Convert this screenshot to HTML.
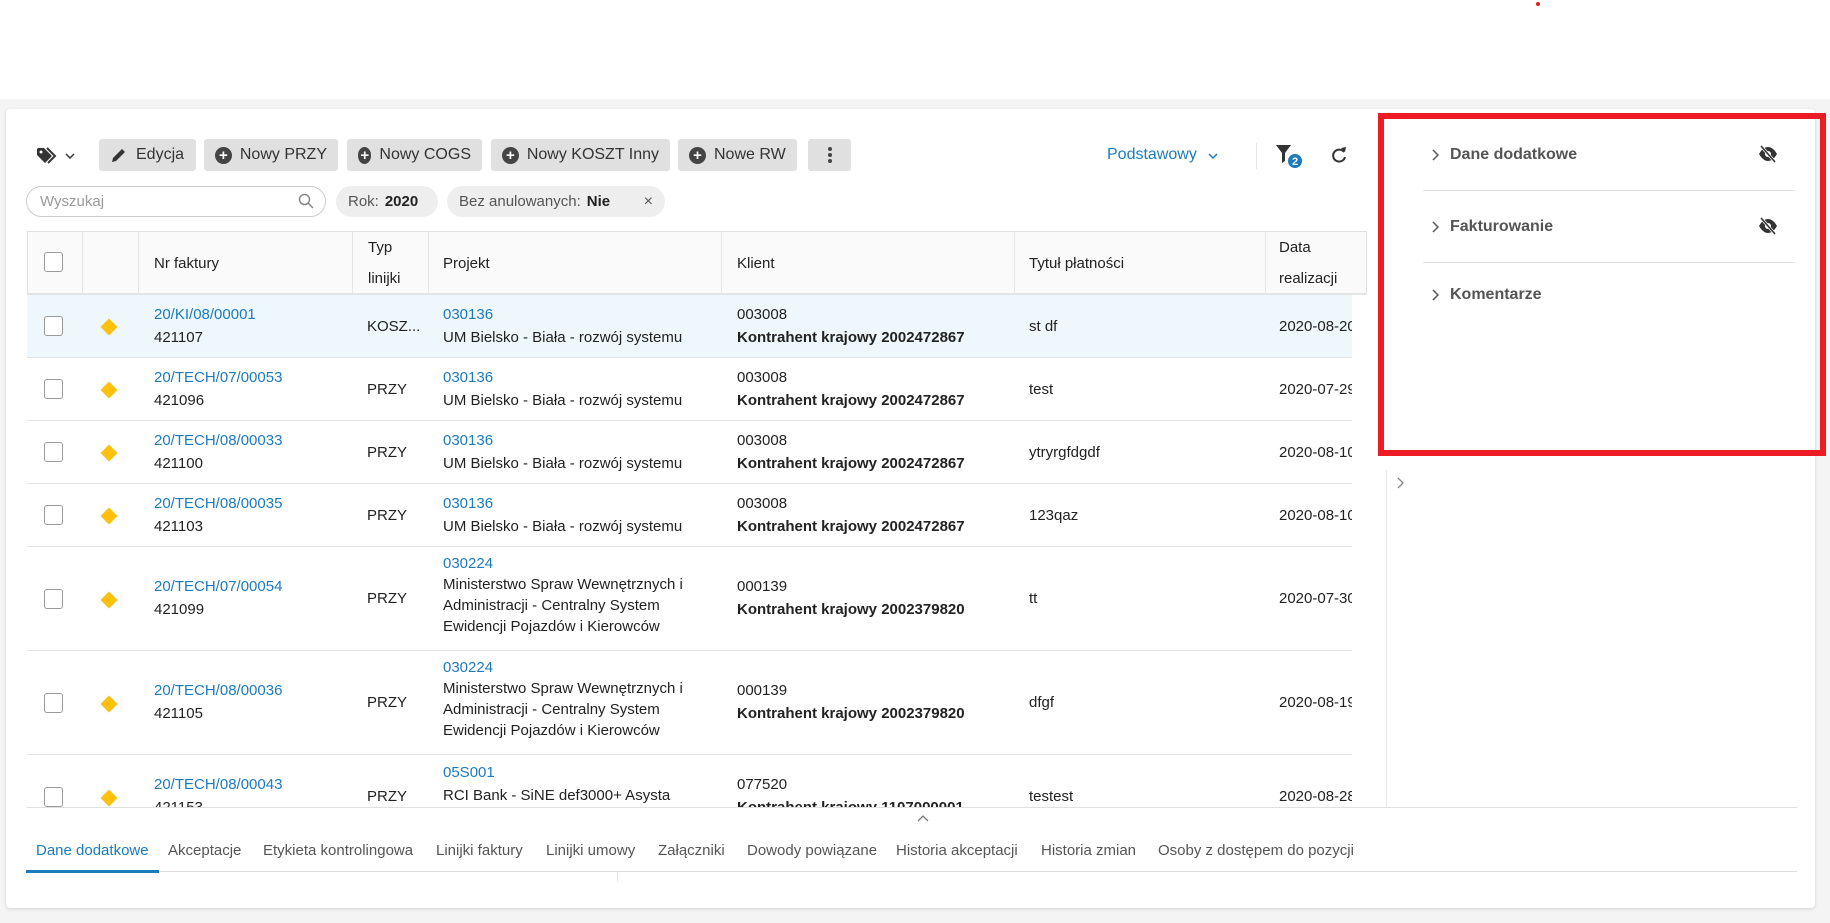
<!DOCTYPE html>
<html><head><meta charset="utf-8"><style>
*{box-sizing:border-box;margin:0;padding:0}
body{width:1830px;height:923px;position:relative;background:#fff;font-family:"Liberation Sans",sans-serif;font-size:15px;color:#222;overflow:hidden}
.abs{position:absolute}
.bg{left:0;top:99px;width:1830px;height:824px;background:#f4f4f4}
.card{left:6px;top:109px;width:1809px;height:799px;background:#fff;border-radius:4px;box-shadow:0 1px 3px rgba(0,0,0,.15)}
.btn{top:139px;height:32px;background:#e0e0e0;border-radius:3px;display:flex;align-items:center;padding:0 11px;color:#333;font-size:16px;white-space:nowrap}
.plus{width:17px;height:17px;border-radius:50%;background:#444;color:#fff;font-size:15px;line-height:17px;text-align:center;font-weight:bold;margin-right:8px}
.chip{top:186px;height:31px;background:#eee;border-radius:16px;display:flex;align-items:center;padding:0 12px;color:#555;font-size:15px}
.chip b{color:#222;margin-left:6px;font-weight:bold}
.hd{top:231px;height:64px;background:#fafafa;border-top:1px solid #e0e0e0;border-bottom:2px solid #e4e4e4}
.vl{width:1px;background:#e6e6e6}
.th{top:231px;height:64px;display:flex;align-items:center;font-size:15px;color:#222}
.row{left:27px;width:1325px;border-bottom:1px solid #e4e4e4}
.cb{width:19px;height:20px;border:1.5px solid #999;border-radius:3px;background:#fff}
.dia{width:12px;height:12px;background:#fdc00f;transform:rotate(45deg)}
.c{font-size:15px;line-height:23px;white-space:nowrap}
.lk{color:#1b7bbd}
.bd{font-weight:bold}
.tab{top:842px;font-size:15px;color:#555;white-space:nowrap}
.ph{left:1431px;font-size:16px;color:#555;display:flex;align-items:center}
</style></head><body>
<div class="abs" style="left:1536px;top:2px;width:4px;height:4px;border-radius:50%;background:#e02020"></div>
<div class="abs bg"></div>
<div class="abs card"></div>

<svg class="abs" style="left:36px;top:147px" width="22" height="18" viewBox="0 0 22 18"><path d="M1 2v6l8 8 7-7-8-8H2z" fill="#333"/><circle cx="5" cy="5" r="1.5" fill="#fff"/><path d="M11 1l8 8-7 7" stroke="#333" stroke-width="2" fill="none"/></svg>
<svg class="abs" style="left:65px;top:152px" width="10" height="8"><path d="M1 2l4 4 4-4" stroke="#333" stroke-width="1.5" fill="none"/></svg>
<div class="abs btn" style="left:99px;width:97px"><svg width="18" height="18" style="margin-right:8px"><path d="M2 16l1-4 9-9 3 3-9 9z" fill="#333"/></svg>Edycja</div>
<div class="abs btn" style="left:204px;width:134px"><span class="plus">+</span>Nowy PRZY</div>
<div class="abs btn" style="left:347px;width:135px"><span class="plus">+</span>Nowy COGS</div>
<div class="abs btn" style="left:491px;width:179px"><span class="plus">+</span>Nowy KOSZT Inny</div>
<div class="abs btn" style="left:678px;width:119px"><span class="plus">+</span>Nowe RW</div>
<div class="abs btn" style="left:808px;width:43px;justify-content:center"><svg width="4" height="16"><circle cx="2" cy="2" r="2" fill="#444"/><circle cx="2" cy="8" r="2" fill="#444"/><circle cx="2" cy="14" r="2" fill="#444"/></svg></div>
<div class="abs" style="left:1107px;top:146px;color:#1b7bbd;font-size:16px">Podstawowy</div>
<svg class="abs" style="left:1208px;top:152px" width="10" height="8"><path d="M1 2l4 4 4-4" stroke="#1b7bbd" stroke-width="1.5" fill="none"/></svg>
<div class="abs vl" style="left:1256px;top:143px;height:26px"></div>
<svg class="abs" style="left:1275px;top:144px" width="30" height="26"><path d="M1 1h15l-6 8v8l-3 2V9z" fill="#333"/><circle cx="20" cy="17" r="7" fill="#1b7bbd"/><text x="20" y="21" font-size="11" fill="#fff" text-anchor="middle" font-family="Liberation Sans" font-weight="bold">2</text></svg>
<svg class="abs" style="left:1331px;top:146px" width="16" height="18"><path d="M13 6A6 6 0 1 0 14 11" stroke="#333" stroke-width="2" fill="none"/><path d="M10 2l4 4 1-5z" fill="#333"/></svg>

<div class="abs" style="left:26px;top:186px;width:300px;height:31px;border:1px solid #ccc;border-radius:16px;padding:6px 13px;color:#999;font-size:15px">Wyszukaj</div>
<svg class="abs" style="left:298px;top:193px" width="16" height="16"><circle cx="6.5" cy="6.5" r="5" stroke="#888" stroke-width="1.5" fill="none"/><path d="M10 10l5 5" stroke="#888" stroke-width="1.5"/></svg>
<div class="abs chip" style="left:336px;width:102px">Rok: <b>2020</b></div>
<div class="abs chip" style="left:447px;width:218px">Bez anulowanych: <b>Nie</b><span style="margin-left:auto;font-size:16px">×</span></div>

<div class="abs hd" style="left:27px;width:1340px;border-left:1px solid #e0e0e0;border-right:1px solid #e0e0e0"></div>
<div class="abs vl" style="left:82px;top:231px;height:64px"></div>
<div class="abs vl" style="left:138px;top:231px;height:64px"></div>
<div class="abs vl" style="left:352px;top:231px;height:64px"></div>
<div class="abs vl" style="left:428px;top:231px;height:64px"></div>
<div class="abs vl" style="left:721px;top:231px;height:64px"></div>
<div class="abs vl" style="left:1014px;top:231px;height:64px"></div>
<div class="abs vl" style="left:1265px;top:231px;height:64px"></div>
<div class="abs cb" style="left:44px;top:252px"></div>
<div class="abs th" style="left:154px">Nr faktury</div>
<div class="abs th" style="left:368px;line-height:31px">Typ<br>linijki</div>
<div class="abs th" style="left:443px">Projekt</div>
<div class="abs th" style="left:737px">Klient</div>
<div class="abs th" style="left:1029px">Tytuł płatności</div>
<div class="abs th" style="left:1279px;line-height:31px">Data<br>realizacji</div>

<div class="abs" style="left:27px;top:295px;width:1325px;height:512px;overflow:hidden">
 <div class="abs" style="left:0;top:0;width:1325px;height:63px;background:#eef7fb;border-bottom:1px solid #e4e4e4"></div>
 <div class="abs row" style="left:0;top:63px;height:63px"></div>
 <div class="abs row" style="left:0;top:126px;height:63px"></div>
 <div class="abs row" style="left:0;top:189px;height:63px"></div>
 <div class="abs row" style="left:0;top:252px;height:104px"></div>
 <div class="abs row" style="left:0;top:356px;height:104px"></div>

 <div class="abs cb" style="left:17px;top:21px"></div><div class="abs dia" style="left:76px;top:26px"></div>
 <div class="abs c" style="left:127px;top:8px"><span class="lk">20/KI/08/00001</span><br>421107</div>
 <div class="abs c" style="left:340px;top:20px">KOSZ...</div>
 <div class="abs c" style="left:416px;top:8px"><span class="lk">030136</span><br>UM Bielsko - Biała - rozwój systemu</div>
 <div class="abs c" style="left:710px;top:8px">003008<br><span class="bd">Kontrahent krajowy 2002472867</span></div>
 <div class="abs c" style="left:1002px;top:20px">st df</div>
 <div class="abs c" style="left:1252px;top:20px">2020-08-20</div>

 <div class="abs cb" style="left:17px;top:84px"></div><div class="abs dia" style="left:76px;top:89px"></div>
 <div class="abs c" style="left:127px;top:71px"><span class="lk">20/TECH/07/00053</span><br>421096</div>
 <div class="abs c" style="left:340px;top:83px">PRZY</div>
 <div class="abs c" style="left:416px;top:71px"><span class="lk">030136</span><br>UM Bielsko - Biała - rozwój systemu</div>
 <div class="abs c" style="left:710px;top:71px">003008<br><span class="bd">Kontrahent krajowy 2002472867</span></div>
 <div class="abs c" style="left:1002px;top:83px">test</div>
 <div class="abs c" style="left:1252px;top:83px">2020-07-29</div>

 <div class="abs cb" style="left:17px;top:147px"></div><div class="abs dia" style="left:76px;top:152px"></div>
 <div class="abs c" style="left:127px;top:134px"><span class="lk">20/TECH/08/00033</span><br>421100</div>
 <div class="abs c" style="left:340px;top:146px">PRZY</div>
 <div class="abs c" style="left:416px;top:134px"><span class="lk">030136</span><br>UM Bielsko - Biała - rozwój systemu</div>
 <div class="abs c" style="left:710px;top:134px">003008<br><span class="bd">Kontrahent krajowy 2002472867</span></div>
 <div class="abs c" style="left:1002px;top:146px">ytryrgfdgdf</div>
 <div class="abs c" style="left:1252px;top:146px">2020-08-10</div>

 <div class="abs cb" style="left:17px;top:210px"></div><div class="abs dia" style="left:76px;top:215px"></div>
 <div class="abs c" style="left:127px;top:197px"><span class="lk">20/TECH/08/00035</span><br>421103</div>
 <div class="abs c" style="left:340px;top:209px">PRZY</div>
 <div class="abs c" style="left:416px;top:197px"><span class="lk">030136</span><br>UM Bielsko - Biała - rozwój systemu</div>
 <div class="abs c" style="left:710px;top:197px">003008<br><span class="bd">Kontrahent krajowy 2002472867</span></div>
 <div class="abs c" style="left:1002px;top:209px">123qaz</div>
 <div class="abs c" style="left:1252px;top:209px">2020-08-10</div>

 <div class="abs cb" style="left:17px;top:294px"></div><div class="abs dia" style="left:76px;top:299px"></div>
 <div class="abs c" style="left:127px;top:280px"><span class="lk">20/TECH/07/00054</span><br>421099</div>
 <div class="abs c" style="left:340px;top:292px">PRZY</div>
 <div class="abs c" style="left:416px;top:258px;line-height:21px"><span class="lk">030224</span><br>Ministerstwo Spraw Wewnętrznych i<br>Administracji - Centralny System<br>Ewidencji Pojazdów i Kierowców</div>
 <div class="abs c" style="left:710px;top:280px">000139<br><span class="bd">Kontrahent krajowy 2002379820</span></div>
 <div class="abs c" style="left:1002px;top:292px">tt</div>
 <div class="abs c" style="left:1252px;top:292px">2020-07-30</div>

 <div class="abs cb" style="left:17px;top:398px"></div><div class="abs dia" style="left:76px;top:403px"></div>
 <div class="abs c" style="left:127px;top:384px"><span class="lk">20/TECH/08/00036</span><br>421105</div>
 <div class="abs c" style="left:340px;top:396px">PRZY</div>
 <div class="abs c" style="left:416px;top:362px;line-height:21px"><span class="lk">030224</span><br>Ministerstwo Spraw Wewnętrznych i<br>Administracji - Centralny System<br>Ewidencji Pojazdów i Kierowców</div>
 <div class="abs c" style="left:710px;top:384px">000139<br><span class="bd">Kontrahent krajowy 2002379820</span></div>
 <div class="abs c" style="left:1002px;top:396px">dfgf</div>
 <div class="abs c" style="left:1252px;top:396px">2020-08-19</div>

 <div class="abs cb" style="left:17px;top:492px"></div><div class="abs dia" style="left:76px;top:497px"></div>
 <div class="abs c" style="left:127px;top:478px"><span class="lk">20/TECH/08/00043</span><br>421153</div>
 <div class="abs c" style="left:340px;top:490px">PRZY</div>
 <div class="abs c" style="left:416px;top:466px"><span class="lk">05S001</span><br>RCI Bank - SiNE def3000+ Asysta</div>
 <div class="abs c" style="left:710px;top:478px">077520<br><span class="bd">Kontrahent krajowy 1107000001</span></div>
 <div class="abs c" style="left:1002px;top:490px">testest</div>
 <div class="abs c" style="left:1252px;top:490px">2020-08-28</div>
</div>

<div class="abs" style="left:27px;top:807px;width:1770px;height:1px;background:#e0e0e0"></div>
<svg class="abs" style="left:917px;top:815px" width="12" height="8"><path d="M1 6l5-5 5 5" stroke="#777" stroke-width="1.3" fill="none"/></svg>
<div class="abs vl" style="left:1386px;top:470px;height:337px"></div>
<svg class="abs" style="left:1396px;top:477px" width="8" height="12"><path d="M2 1l5 5-5 5" stroke="#888" stroke-width="1.3" fill="none"/></svg>
<div class="abs tab" style="left:36px;color:#1b7bbd">Dane dodatkowe</div>
<div class="abs tab" style="left:168px">Akceptacje</div>
<div class="abs tab" style="left:263px">Etykieta kontrolingowa</div>
<div class="abs tab" style="left:436px">Linijki faktury</div>
<div class="abs tab" style="left:546px">Linijki umowy</div>
<div class="abs tab" style="left:658px">Załączniki</div>
<div class="abs tab" style="left:747px">Dowody powiązane</div>
<div class="abs tab" style="left:896px">Historia akceptacji</div>
<div class="abs tab" style="left:1041px">Historia zmian</div>
<div class="abs tab" style="left:1158px">Osoby z dostępem do pozycji</div>
<div class="abs" style="left:27px;top:871px;width:1770px;height:1px;background:#ddd"></div>
<div class="abs" style="left:26px;top:870px;width:133px;height:3px;background:#1b7bbd"></div>
<div class="abs vl" style="left:617px;top:872px;height:10px"></div>

<div class="abs" style="left:1378px;top:113px;width:448px;height:343px;border:6px solid #ec1c24"></div>
<div class="abs ph" style="top:146px"><svg width="8" height="12" style="margin-right:11px"><path d="M2 1l5 5-5 5" stroke="#555" stroke-width="1.5" fill="none"/></svg><b>Dane dodatkowe</b></div>
<div class="abs ph" style="top:218px"><svg width="8" height="12" style="margin-right:11px"><path d="M2 1l5 5-5 5" stroke="#555" stroke-width="1.5" fill="none"/></svg><b>Fakturowanie</b></div>
<div class="abs ph" style="top:286px"><svg width="8" height="12" style="margin-right:11px"><path d="M2 1l5 5-5 5" stroke="#555" stroke-width="1.5" fill="none"/></svg><b>Komentarze</b></div>
<svg class="abs" style="left:1758px;top:145px" width="20" height="18"><path d="M1 9c3-5 6-7 9-7s6 2 9 7c-3 5-6 7-9 7s-6-2-9-7z" fill="#333"/><circle cx="10" cy="9" r="3" fill="#fff"/><path d="M3 1l14 16" stroke="#fff" stroke-width="3"/><path d="M3 1l14 16" stroke="#333" stroke-width="1.6"/></svg>
<svg class="abs" style="left:1758px;top:217px" width="20" height="18"><path d="M1 9c3-5 6-7 9-7s6 2 9 7c-3 5-6 7-9 7s-6-2-9-7z" fill="#333"/><circle cx="10" cy="9" r="3" fill="#fff"/><path d="M3 1l14 16" stroke="#fff" stroke-width="3"/><path d="M3 1l14 16" stroke="#333" stroke-width="1.6"/></svg>
<div class="abs" style="left:1423px;top:190px;width:372px;height:1px;background:#e0e0e0"></div>
<div class="abs" style="left:1423px;top:262px;width:372px;height:1px;background:#e0e0e0"></div>
</body></html>
